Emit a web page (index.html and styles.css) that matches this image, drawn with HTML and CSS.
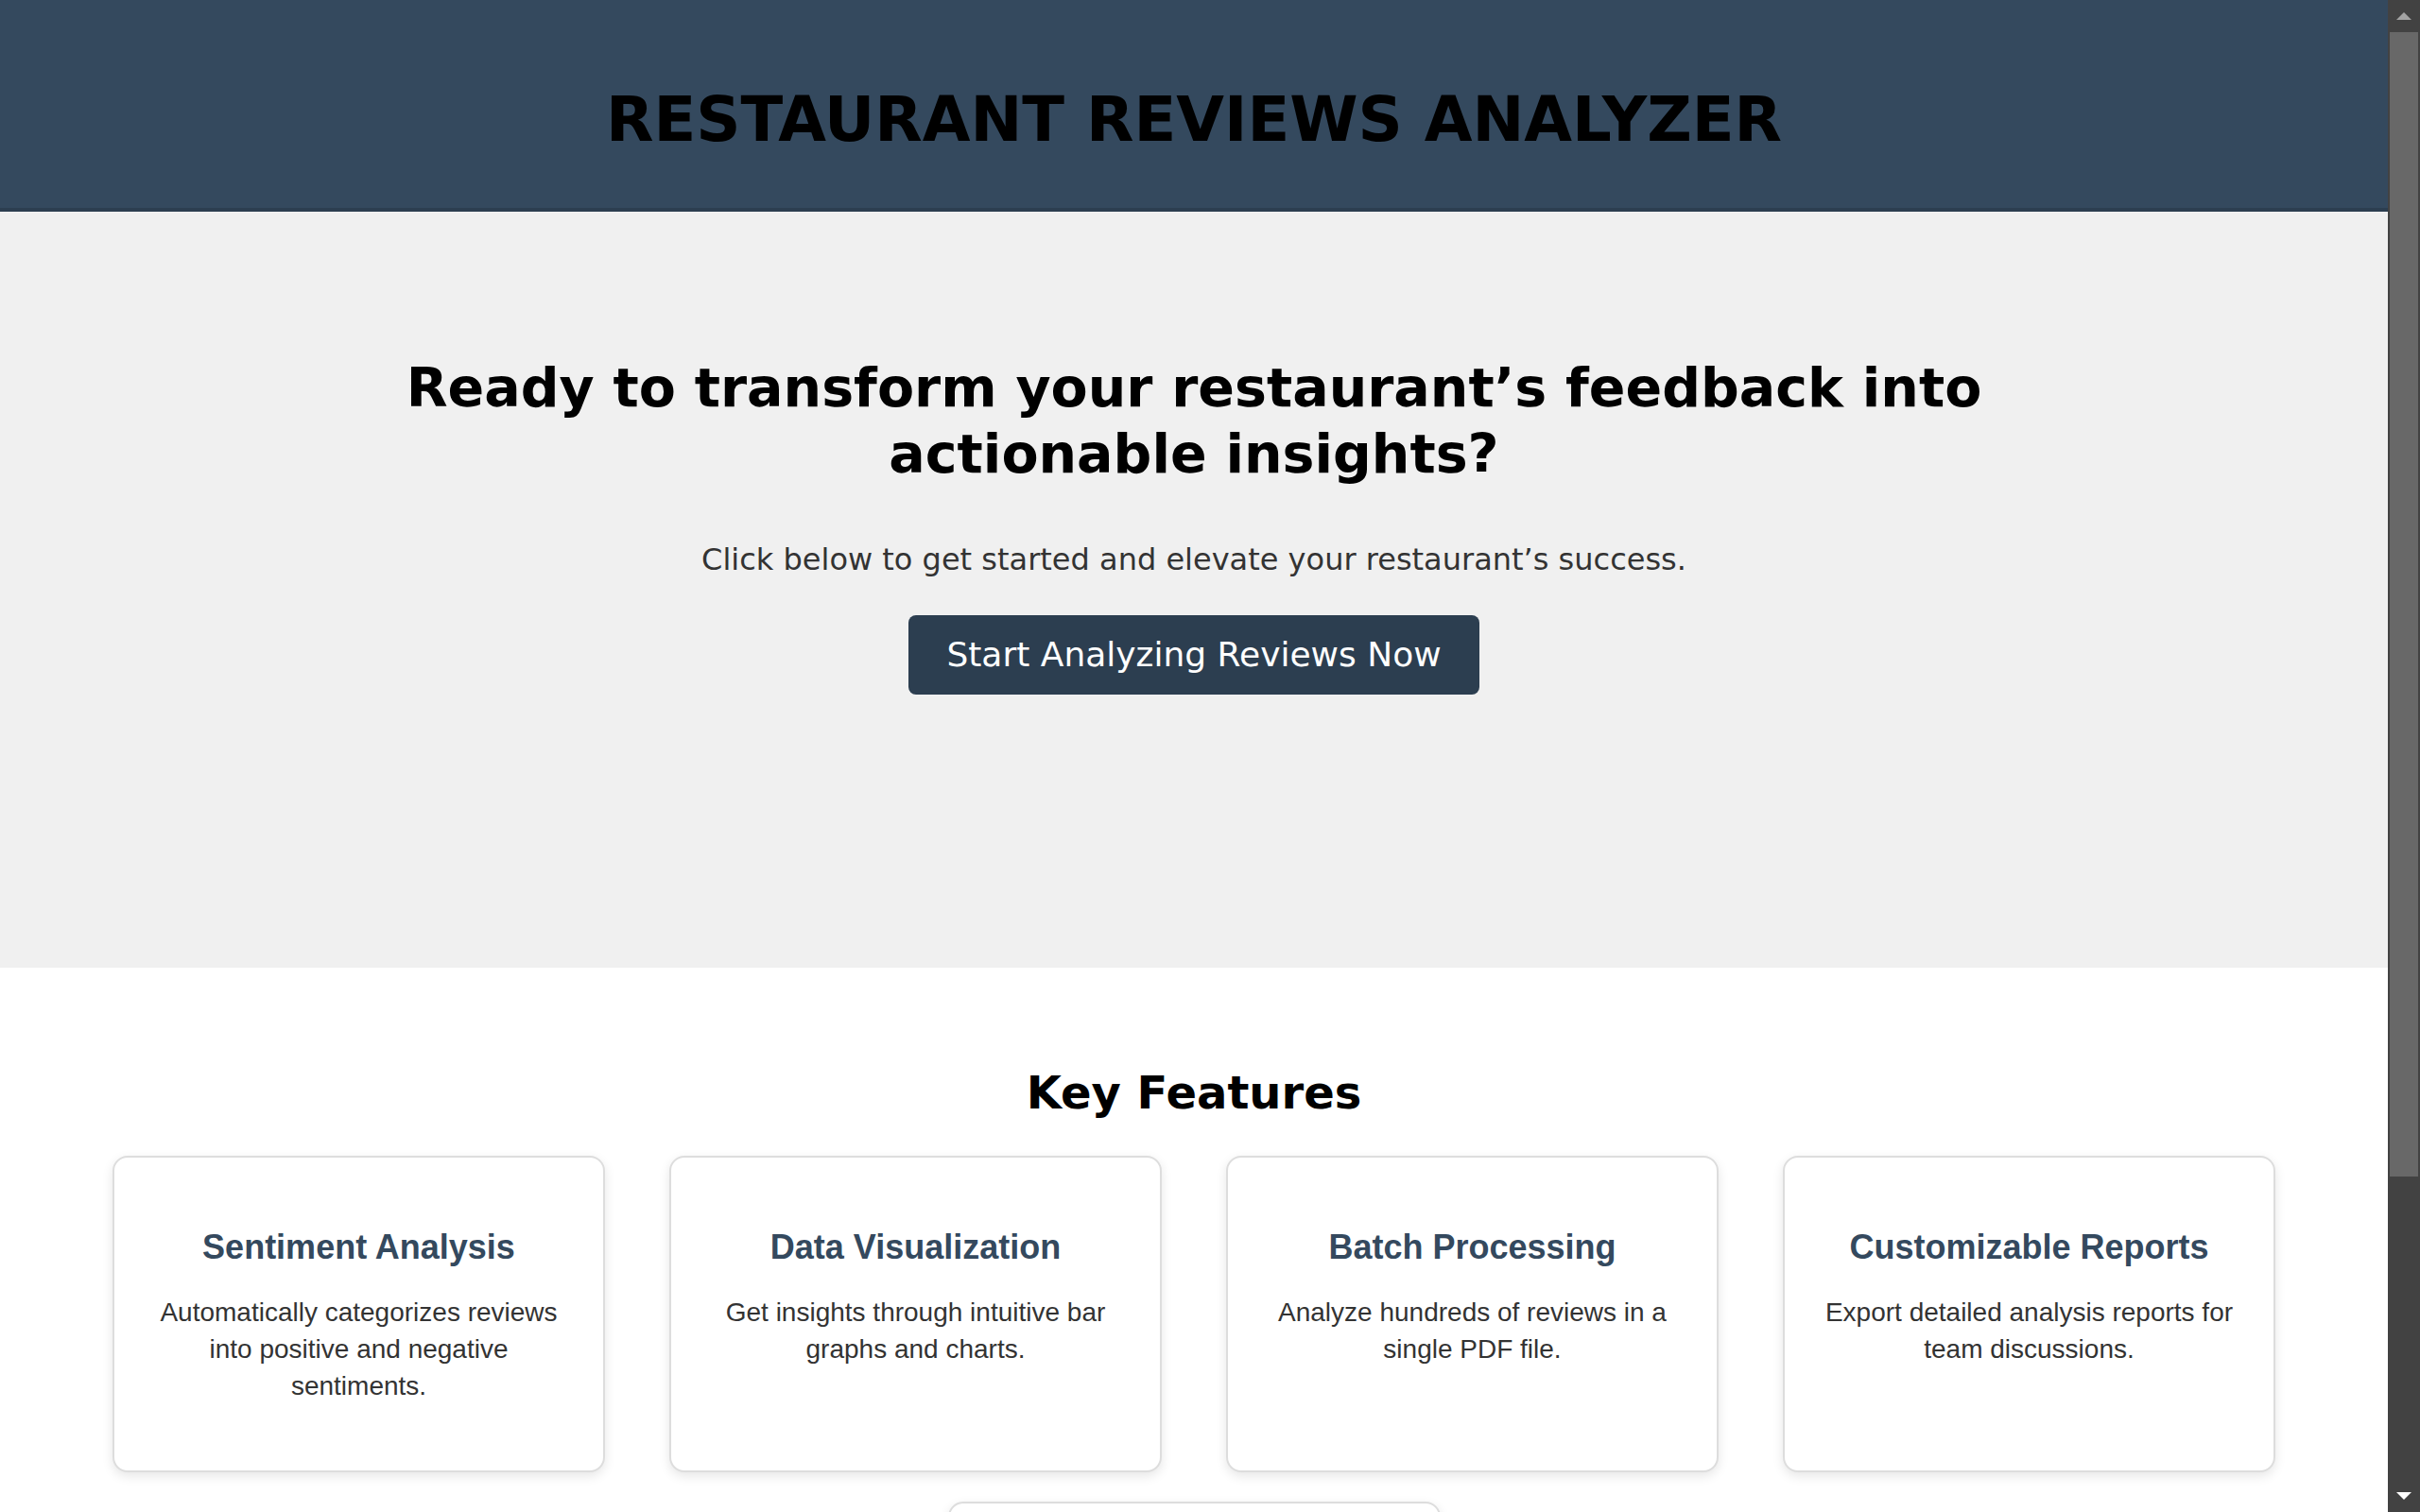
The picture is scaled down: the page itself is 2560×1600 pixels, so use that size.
FILE: index.html
```html
<!DOCTYPE html>
<html lang="en">
<head>
<meta charset="utf-8">
<title>Restaurant Reviews Analyzer</title>
<link rel="stylesheet" href="styles.css">
</head>
<body>
<div class="page">
  <header class="site-header">
    <h1 class="site-title">Restaurant Reviews Analyzer</h1>
  </header>
  <section class="hero">
    <div class="hero-inner">
      <h2 class="hero-title">Ready to transform your restaurant’s feedback into actionable insights?</h2>
      <p class="hero-text">Click below to get started and elevate your restaurant’s success.</p>
      <div class="cta-wrap">
        <button class="cta" type="button">Start Analyzing Reviews Now</button>
      </div>
    </div>
  </section>
  <section class="features">
    <h2 class="features-title">Key Features</h2>
    <div class="feature-grid">
      <div class="card">
        <h3 class="card-title">Sentiment Analysis</h3>
        <p class="card-text">Automatically categorizes reviews into positive and negative sentiments.</p>
      </div>
      <div class="card">
        <h3 class="card-title">Data Visualization</h3>
        <p class="card-text">Get insights through intuitive bar graphs and charts.</p>
      </div>
      <div class="card">
        <h3 class="card-title">Batch Processing</h3>
        <p class="card-text">Analyze hundreds of reviews in a single PDF file.</p>
      </div>
      <div class="card">
        <h3 class="card-title">Customizable Reports</h3>
        <p class="card-text">Export detailed analysis reports for team discussions.</p>
      </div>
      <div class="card">
        <h3 class="card-title">User-Friendly Interface</h3>
        <p class="card-text">Simple upload process and clear, easy-to-read results.</p>
      </div>
    </div>
  </section>
</div>
<div class="scrollbar" aria-hidden="true">
  <div class="sb-btn"><span class="sb-arrow-up"></span></div>
  <div class="sb-track"><div class="sb-thumb"></div></div>
  <div class="sb-btn"><span class="sb-arrow-down"></span></div>
</div>
</body>
</html>
```
FILE: styles.css
```css
html {
  background: #ffffff;
}
body {
  margin: 0;
  font-family: "DejaVu Sans", Verdana, sans-serif;
  color: #000;
  display: grid;
  grid-template-columns: minmax(0, 1fr) 34px;
  align-items: start;
}

/* fake window scrollbar (as in the reference) */
.scrollbar {
  position: sticky;
  top: 0;
  height: 100vh;
  display: flex;
  flex-direction: column;
  background: #424242;
}
.sb-btn {
  height: 34px;
  flex: 0 0 34px;
  display: flex;
  align-items: center;
  justify-content: center;
}
.sb-arrow-up {
  width: 0;
  height: 0;
  border-left: 8px solid transparent;
  border-right: 8px solid transparent;
  border-bottom: 8px solid #a3a3a3;
}
.sb-arrow-down {
  width: 0;
  height: 0;
  border-left: 8px solid transparent;
  border-right: 8px solid transparent;
  border-top: 8px solid #ffffff;
}
.sb-track {
  flex: 1;
  padding: 0 2px;
}
.sb-thumb {
  height: 1211px;
  background: #686868;
}

/* header */
.site-header {
  background: #34495e;
  border-bottom: 4px solid #2c3e50;
  padding: 88px 0 55px;
  text-align: center;
}
.site-title {
  margin: 0;
  font-size: 65.6px;
  font-weight: bold;
  text-transform: uppercase;
  line-height: 77px;
  color: #000;
}

/* hero */
.hero {
  background: #f0f0f0;
  height: 800px;
  box-sizing: border-box;
  padding-top: 151px;
  text-align: center;
}
.hero-inner {
  max-width: 1800px;
  margin: 0 auto;
}
.hero-title {
  margin: 0 0 58px;
  font-size: 57px;
  line-height: 70px;
  font-weight: bold;
}
.hero-text {
  margin: 0 0 40px;
  font-size: 32px;
  line-height: normal;
  color: #333;
}
.cta-wrap {
  display: flex;
  justify-content: center;
}
.cta {
  font-family: "DejaVu Sans", Verdana, sans-serif;
  font-size: 36px;
  line-height: 42px;
  padding: 21px 40px;
  border: none;
  border-radius: 8px;
  background: #2c3e50;
  color: #fff;
  cursor: pointer;
}

/* features */
.features {
  background: #fff;
  padding: 104px 0 140px;
  text-align: center;
}
.features-title {
  margin: 0 0 39px;
  font-size: 48px;
  line-height: normal;
  font-weight: bold;
}
.feature-grid {
  display: flex;
  flex-wrap: wrap;
  justify-content: center;
  gap: 31px 68px;
}
.card {
  flex: 0 0 521px;
  box-sizing: border-box;
  background: #fff;
  border: 2px solid #dddddd;
  border-radius: 16px;
  box-shadow: 0 4px 12px rgba(0, 0, 0, 0.1);
  padding: 38px 40px 41px;
  font-family: "Liberation Sans", Arial, sans-serif;
}
.card-title {
  margin: 36px 0 28px;
  font-size: 36px;
  font-weight: bold;
  color: #34495e;
  line-height: normal;
}
.card-text {
  margin: 0 0 28px;
  font-size: 28px;
  line-height: 1.4;
  color: #333;
}
```
